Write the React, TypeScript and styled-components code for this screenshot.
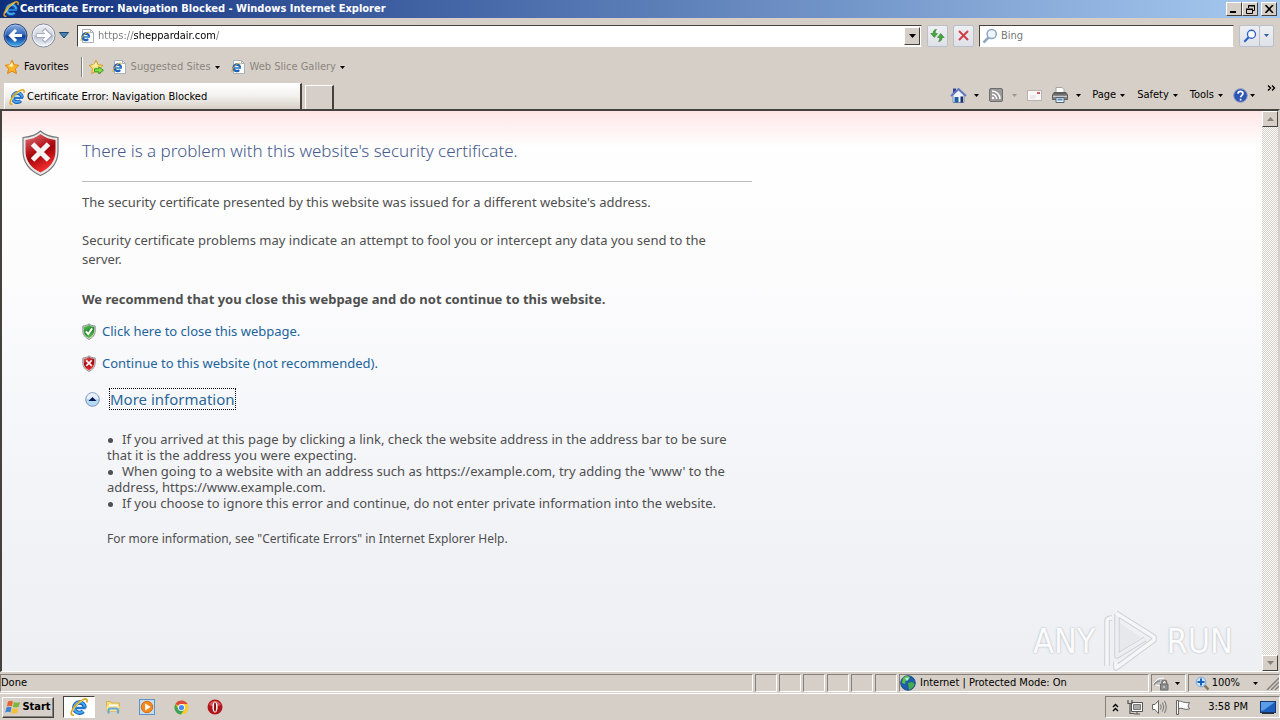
import React from 'react';
import styled, { createGlobalStyle } from 'styled-components';

const face = '#d6cfc7';
const light = '#ffffff';
const shadow = '#84807a';
const dark = '#45423e';
const uiFont = '"DejaVu Sans Condensed", "Noto Sans", sans-serif';
const pageFont = '"Noto Sans", "Open Sans", sans-serif';

const GlobalStyle = createGlobalStyle`
  * { box-sizing: border-box; }
  body { margin: 0; background: ${face}; }
  button, input { font: inherit; color: inherit; padding: 0; margin: 0; border: 0; background: none; border-radius: 0; }
  button { display: inline-flex; align-items: center; justify-content: center; cursor: default; }
  svg { display: block; flex: none; }
`;

const Desktop = styled.div`
  min-height: 100vh;
  display: flex;
  flex-direction: column;
  background: ${face};
  color: #000;
  font: 11px/14px ${uiFont};
  white-space: nowrap;
`;

const TitleBar = styled.header`
  height: 18px;
  flex: none;
  display: flex;
  align-items: center;
  gap: 1px;
  padding: 0 3px;
  background: linear-gradient(90deg, #0f2f7d, #a6caf0);
`;

const WindowTitle = styled.h1`
  flex: 1;
  margin: 0;
  color: #fff;
  font-size: 11px;
  line-height: 18px;
  font-weight: bold;
`;

const WindowButton = styled.button<{ $gap?: boolean }>`
  width: 16px;
  height: 14px;
  margin-left: ${(p) => (p.$gap ? 2 : -1)}px;
  background: ${face};
  border: 1px solid;
  border-color: ${light} ${dark} ${dark} ${light};
`;

const NavRow = styled.div`
  height: 35px;
  flex: none;
  display: flex;
  align-items: center;
  gap: 5px;
  padding: 0 6px 0 3px;
`;

const Travel = styled.div`
  display: flex;
  align-items: center;
  gap: 3px;
`;

const Field = styled.label<{ $width?: string }>`
  flex: ${(p) => (p.$width ? `0 0 ${p.$width}` : '1')};
  min-width: 0;
  height: 22px;
  display: flex;
  align-items: center;
  gap: 3px;
  padding-left: 2px;
  background: #fff;
  border: 1px solid;
  border-color: ${dark} ${face} ${light} ${dark};
`;

const AddressInput = styled.input`
  flex: 1;
  min-width: 0;
  height: 18px;
  outline: 0;
  background: linear-gradient(90deg, #777 36px, #000 36px, #000 117px, #777 117px);
  background-clip: text;
  -webkit-background-clip: text;
  -webkit-text-fill-color: transparent;
`;

const SearchInput = styled.input`
  flex: 1;
  min-width: 0;
  height: 18px;
  outline: 0;
  &::placeholder { color: #777; opacity: 1; }
`;

const DropButton = styled.button`
  width: 16px;
  height: 18px;
  margin-right: 1px;
  background: ${face};
  border: 1px solid;
  border-color: ${light} ${dark} ${dark} ${light};
`;

const SoftButton = styled.button<{ $w?: number }>`
  width: ${(p) => p.$w || 21}px;
  height: 22px;
  flex: none;
  background: linear-gradient(#eeeff3, #dfe1e8);
  border: 1px solid #b9bfcb;
  border-radius: 2px;
`;

const SoftPair = styled.div`
  display: flex;
  ${SoftButton} + ${SoftButton} { margin-left: -1px; }
`;

const FavoritesRow = styled.nav`
  height: 28px;
  flex: none;
  display: flex;
  align-items: center;
  padding-left: 4px;
`;

const FlatButton = styled.button<{ $muted?: boolean; $gap?: number; $right?: number }>`
  height: 20px;
  gap: ${(p) => p.$gap ?? 4}px;
  padding-right: ${(p) => p.$right ?? 0}px;
  color: ${(p) => (p.$muted ? '#8a8680' : '#000')};
`;

const Divider = styled.span`
  width: 2px;
  height: 20px;
  margin: 0 5px 0 12px;
  border-left: 1px solid ${shadow};
  border-right: 1px solid ${light};
`;

const TabRow = styled.div`
  height: 28px;
  flex: none;
  display: flex;
  align-items: flex-end;
  padding-left: 4px;
`;

const Tab = styled.button<{ $active?: boolean }>`
  && { justify-content: flex-start; }
  width: ${(p) => (p.$active ? 298 : 29)}px;
  height: ${(p) => (p.$active ? 26 : 24)}px;
  margin-right: 3px;
  padding-left: 4px;
  gap: 2px;
  background: ${(p) => (p.$active ? `linear-gradient(#fff, #f2f0ed 50%, ${face})` : face)};
  border: solid;
  border-width: 1px 2px 0 1px;
  border-color: ${light} ${dark} ${face} ${light};
`;

const CommandBar = styled.div`
  flex: 1;
  height: 28px;
  display: flex;
  align-items: center;
  justify-content: flex-end;
  gap: 10px;
  padding-right: 4px;
`;

const Overflow = styled.button`
  align-self: flex-start;
  height: 14px;
`;

const Viewport = styled.div`
  flex: 1;
  display: flex;
  position: relative;
  border: solid;
  border-width: 2px 2px 1px 2px;
  border-color: ${dark} ${face} ${light} ${dark};
`;

const Page = styled.main`
  flex: 1;
  min-width: 0;
  display: flex;
  align-items: flex-start;
  gap: 21px;
  padding: 18px 20px 24px 18px;
  background: linear-gradient(#ffe6e6, rgba(255, 255, 255, 0) 36px), linear-gradient(#fff, #fcfcfd 30%, #f4f5f9 62%, #edeff3);
  color: #4f4f4f;
  font: 13px/19px ${pageFont};
  white-space: normal;
`;

const Article = styled.article`
  flex: 0 1 670px;
  min-width: 0;
`;

const Heading = styled.h2`
  margin: 0;
  padding: 10px 0 18px;
  border-bottom: 1px solid #b9bbbd;
  color: #465a8c;
  font-size: 17px;
  line-height: 24px;
  font-weight: 300;
`;

const Para = styled.p<{ $strong?: boolean }>`
  margin: 0;
  padding: ${(p) => (p.$strong ? '13px 0 6px' : '11px 20px 8px 0')};
  font-weight: ${(p) => (p.$strong ? 700 : 400)};
`;

const Choice = styled.a`
  display: flex;
  width: fit-content;
  align-items: center;
  gap: 6px;
  height: 32px;
  color: #20649b;
  text-decoration: none;
`;

const MoreRow = styled.div`
  display: flex;
  align-items: center;
  gap: 10px;
  height: 40px;
  padding-left: 3px;
`;

const MoreLink = styled.a`
  height: 20px;
  outline: 1px dotted #000;
  color: #2a6798;
  font-size: 15px;
  line-height: 20px;
  font-weight: 400;
  text-decoration: none;
`;

const Details = styled.div`
  padding: 12px 0 0 25px;
  line-height: 16px;
`;

const Tips = styled.ul`
  margin: 0 0 18px;
  padding: 0;
  list-style: none;
`;

const Tip = styled.li`
  &::before {
    content: '';
    display: inline-block;
    width: 5px;
    height: 5px;
    margin: 0 9px 1px 1px;
    border-radius: 50%;
    background: #4f4f4f;
  }
`;

const HelpNote = styled.p`
  margin: 0;
  font-size: 12px;
  line-height: 20px;
`;

const ScrollBar = styled.div`
  width: 16px;
  flex: none;
  display: flex;
  flex-direction: column;
  justify-content: space-between;
  background: repeating-conic-gradient(#fff 0 25%, ${face} 0 50%) 0 0 / 2px 2px;
`;

const ScrollButton = styled.button`
  height: 16px;
  background: ${face};
  border: 1px solid;
  border-color: ${light} ${dark} ${dark} ${light};
`;

const Watermark = styled.div`
  position: absolute;
  right: 45px;
  bottom: -2px;
  display: flex;
  align-items: center;
  gap: 8px;
  color: #fafbfc;
  font: 34px/64px "Liberation Sans Narrow", "DejaVu Sans Condensed", sans-serif;
  text-shadow: 0 0 2px #a6a8ac;
  pointer-events: none;
`;

const StatusBar = styled.footer`
  height: 22px;
  flex: none;
  display: flex;
  gap: 2px;
  padding: 2px 0 1px;
  border-bottom: 1px solid ${light};
`;

const Pane = styled.div<{ $w?: number; $gap?: number }>`
  flex: ${(p) => (p.$w ? `0 0 ${p.$w}px` : '1')};
  display: flex;
  align-items: center;
  gap: ${(p) => p.$gap ?? 4}px;
  border: 1px solid;
  border-color: ${shadow} ${light} ${light} ${shadow};
`;

const Spacer = styled.span`
  flex: 1;
`;

const TaskBar = styled.footer`
  height: 26px;
  flex: none;
  display: flex;
  align-items: center;
  padding: 0 0 0 2px;
`;

const StartButton = styled.button`
  width: 52px;
  height: 21px;
  gap: 1px;
  margin-right: 9px;
  font-weight: bold;
  background: ${face};
  border: 1px solid;
  border-color: ${light} ${dark} ${dark} ${light};
  box-shadow: inset -1px -1px ${shadow};
`;

const TaskButton = styled.button<{ $active?: boolean }>`
  width: ${(p) => (p.$active ? 32 : 34)}px;
  height: 22px;
  margin-right: ${(p) => (p.$active ? 1 : 0)}px;
  background: ${(p) => (p.$active ? '#fff' : 'none')};
  border: 1px solid;
  border-color: ${(p) => (p.$active ? `${dark} ${light} ${light} ${dark}` : 'transparent')};
`;

const Tray = styled.div`
  height: 22px;
  display: flex;
  align-items: center;
  gap: 8px;
  padding: 0 3px 0 6px;
  border: 1px solid;
  border-color: ${shadow} ${light} ${light} ${shadow};
`;

const Clock = styled.time`
  padding: 0 4px 0 9px;
`;

const Caret = ({ color = '#000', up = false, wide = false }: { color?: string; up?: boolean; wide?: boolean }) => (
  <svg width={wide ? 7 : 5} height={wide ? 4 : 3} viewBox="0 0 7 4" preserveAspectRatio="none" aria-hidden="true">
    <path d={up ? 'M0 4 3.5 0 7 4Z' : 'M0 0H7L3.5 4Z'} fill={color} />
  </svg>
);

const IeMark = ({ size = 16 }: { size?: number }) => (
  <svg width={size} height={size} viewBox="0 0 16 16" fill="none" aria-hidden="true">
    <circle cx="8.400" cy="8.600" r="4.600" stroke="#1458b0" strokeWidth="3.800" strokeDasharray="25.500 3.400" strokeDashoffset="-3.400" />
    <circle cx="8.400" cy="8.400" r="4.700" stroke="#45a9ee" strokeWidth="2" strokeDasharray="25.800 3.700" strokeDashoffset="-3.800" />
    <path d="M5 8.900H14" stroke="#2379cf" strokeWidth="2.200" />
    <path d="M3.400 15C1.400 15.700.4 14.400 1.600 11.600 3.400 7.400 8 2.900 11.800 1.300 14.600.1 15.900 1.400 14.800 4" stroke="#dba51c" strokeWidth="1.500" />
    <path d="M2.200 12.200C4 8 8.200 3.800 11.800 2" stroke="#fbe58a" strokeWidth=".8" />
  </svg>
);

const IePage = () => (
  <svg width="15" height="16" viewBox="0 0 15 16" fill="none" aria-hidden="true">
    <path d="M2.500 1.500H10.500L13.500 4.500V14.500H2.500Z" fill="#fff" stroke="#a9b0ba" />
    <path d="M10.500 1.500V4.500H13.500" stroke="#a9b0ba" />
    <circle cx="5.800" cy="8.800" r="3.300" stroke="#1d62b6" strokeWidth="2.300" strokeDasharray="18.200 2.500" strokeDashoffset="-2.500" />
    <path d="M3.500 9H10" stroke="#2f7fd0" strokeWidth="1.600" />
    <path d="M1.400 13C.3 12.200 2 8.200 5.400 5.600 8 3.600 9.800 3.800 9.400 5.400" stroke="#d9aa28" />
  </svg>
);

const starPath = 'M8 1.2 10.1 5.7 15 6.3 11.4 9.7 12.4 14.6 8 12.2 3.6 14.6 4.6 9.7 1 6.3 5.9 5.7Z';

const Star = ({ add = false }: { add?: boolean }) => (
  <svg width="16" height="16" viewBox="0 0 16 16" aria-hidden="true">
    <path d={starPath} fill={add ? '#fbe27a' : '#f9b52b'} stroke={add ? '#d79d28' : '#dc8616'} />
    <path d="M8 3.2 9.3 6.6 8 8 4.2 7Z" fill="#fff0a8" />
    {add && <path d="M6.5 9.8H10.8V7.8L15.4 11.3 10.8 14.8V12.8H6.5Z" fill="#8be04c" stroke="#339a24" />}
  </svg>
);

const TravelIcon = ({ forward = false }: { forward?: boolean }) => {
  const id = forward ? 'fwd' : 'back';
  return (
    <svg width="25" height="25" viewBox="0 0 25 25" fill="none" aria-hidden="true">
      <defs>
        <linearGradient id={id} x2="0" y2="1">
          <stop stopColor={forward ? '#eceef3' : '#8fb0e0'} />
          <stop offset=".48" stopColor={forward ? '#d3d8e2' : '#2d62b8'} />
          <stop offset=".52" stopColor={forward ? '#b9c1d0' : '#0b3691'} />
          <stop offset="1" stopColor={forward ? '#f6f9fc' : '#4cb4f2'} />
        </linearGradient>
      </defs>
      <circle cx="12.500" cy="12.500" r="11.500" fill={`url(#${id})`} stroke={forward ? '#7f879b' : '#2a467c'} />
      <circle cx="12.500" cy="12.500" r="10.500" stroke="#fff" strokeOpacity={forward ? '.7' : '.25'} />
      {forward && <path d="M5.500 12.500H18M12.500 6.500 18.500 12.500 12.500 18.500" stroke="#9da5b8" strokeWidth="4.500" />}
      <path
        d={forward ? 'M6 12.500H18M13 7.500 18 12.500 13 17.500' : 'M19 12.500H8M13 7 7.500 12.500 13 18'}
        stroke="#fff"
        strokeWidth="3"
      />
    </svg>
  );
};

const shieldPath = 'M20 2C24 6 31 8 37.500 8.500V22C37.500 34 30 42 20 46.500 10 42 2.500 34 2.500 22V8.500C9 8 16 6 20 2Z';

const Shield = ({ kind, w, h }: { kind: 'bad' | 'good'; w: number; h: number }) => {
  const id = `${kind}${w}`;
  const good = kind === 'good';
  return (
    <svg width={w} height={h} viewBox="0 0 40 48" fill="none" aria-hidden="true">
      <defs>
        <linearGradient id={id} x2=".4" y2="1">
          <stop stopColor={good ? '#7ec56e' : '#dc7c7f'} />
          <stop offset=".45" stopColor={good ? '#2f9a34' : '#b8161d'} />
          <stop offset=".6" stopColor={good ? '#1c7f25' : '#a30209'} />
          <stop offset="1" stopColor={good ? '#62c552' : '#ee2d2d'} />
        </linearGradient>
      </defs>
      <path d={shieldPath} fill="#e9e9e9" stroke="#77787a" strokeWidth={w < 20 ? 2.5 : 1.2} />
      <path
        d="M20 5C24 8.500 30 10.500 35 11V22C35 32.500 28.500 39.500 20 43.500 11.500 39.500 5 32.500 5 22V11C10 10.500 16 8.500 20 5Z"
        fill={`url(#${id})`}
      />
      {good ? (
        <path d="M11 24 18 31 29 15" stroke="#fff" strokeWidth="5.500" />
      ) : (
        <path d="M12 15 28 31M28 15 12 31" stroke="#f4f2f2" strokeWidth="5" />
      )}
    </svg>
  );
};

const Magnifier = ({ size, color, lens = '#fff' }: { size: number; color: string; lens?: string }) => (
  <svg width={size} height={size} viewBox="0 0 16 16" fill="none" aria-hidden="true">
    <path d="M6.500 9.500 1.500 14.500" stroke={color} strokeWidth="2.500" />
    <circle cx="9.700" cy="6" r="4.600" fill={lens} stroke={color} strokeWidth="1.500" />
  </svg>
);

const ZoomIcon = () => (
  <svg width="15" height="15" viewBox="0 0 15 15" fill="none" aria-hidden="true">
    <path d="M9 9 13.500 13.500" stroke="#8a7a64" strokeWidth="2.500" />
    <circle cx="6" cy="6" r="4.800" fill="#cfe5fb" stroke="#7da7d6" />
    <path d="M6 2.500V9.500M2.500 6H9.500" stroke="#1560c0" strokeWidth="2" />
  </svg>
);

const RefreshIcon = () => (
  <svg width="15" height="15" viewBox="0 0 15 15" aria-hidden="true">
    <path d="M6.500 1.500C3.500 1.500 3 4 3.200 5.500H.8L4.300 9.500 7.500 5.500H5.400C5.200 4 5.300 2.700 6.500 1.500Z" fill="#46a83b" stroke="#2b7f2d" strokeWidth=".6" />
    <path d="M8.500 13.500C11.500 13.500 12.200 11 12 9.500H14.200L10.700 5.500 7.500 9.500H9.600C9.800 11 9.700 12.300 8.500 13.500Z" fill="#46a83b" stroke="#2b7f2d" strokeWidth=".6" />
  </svg>
);

const HomeIcon = () => (
  <svg width="17" height="17" viewBox="0 0 17 17" aria-hidden="true">
    <path d="M3 1.500H6V6H3Z" fill="#34439a" />
    <path d="M3 8 8.500 3 14 8V15.500H3Z" fill="#f1f4fb" stroke="#7d8bb0" />
    <path d="M1 9 8.500 2 16 9" fill="none" stroke="#5f78c0" strokeWidth="1.800" />
    <path d="M4.500 10H8.500V15.500H4.500Z" fill="#1e64a4" />
    <path d="M10.500 9.500H13V15.500H10.500Z" fill="#1b2f6b" />
  </svg>
);

const FeedIcon = () => (
  <svg width="14" height="14" viewBox="0 0 14 14" fill="none" aria-hidden="true">
    <rect x=".5" y=".5" width="13" height="13" rx="1.500" fill="#999" stroke="#6e6e6e" />
    <circle cx="4" cy="10" r="1.300" fill="#fff" />
    <path d="M3 6.300A4.700 4.700 0 0 1 7.700 11M3 3A8 8 0 0 1 11 11" stroke="#fff" strokeWidth="1.500" />
  </svg>
);

const MailIcon = () => (
  <svg width="15" height="11" viewBox="0 0 15 11" fill="none" aria-hidden="true">
    <rect x=".5" y=".5" width="14" height="10" fill="#f8f7f5" stroke="#b8b3ae" />
    <path d="M3 6H9M3 8H8" stroke="#ddd" />
    <path d="M10 2H13V4H10Z" fill="#cf625c" />
  </svg>
);

const PrinterIcon = () => (
  <svg width="16" height="16" viewBox="0 0 16 16" aria-hidden="true">
    <path d="M4 .5H10L12 2.500V6H4Z" fill="#fff" stroke="#a5a5a5" />
    <path d="M2 5.500H14L15.500 8V12.500H.5V8Z" fill="#868686" stroke="#5c5c5c" />
    <path d="M2 6H14V7.500H2Z" fill="#5f5f5f" />
    <path d="M1 9H15V10H1Z" fill="#c9c9c9" />
    <path d="M4 10.500H12V15.500H4Z" fill="#eef5fa" stroke="#54616e" />
    <path d="M5.500 11.500H10.500V13.500H5.500Z" fill="#4f8fc0" />
  </svg>
);

const HelpIcon = () => (
  <svg width="15" height="15" viewBox="0 0 15 15" fill="none" aria-hidden="true">
    <circle cx="7.500" cy="7.500" r="6.800" fill="#2f56b4" stroke="#8b9cc4" />
    <path d="M5 5.800C5 2.700 10 2.700 10 5.600 10 7.400 7.600 7.400 7.600 9.300M7.600 10.800V12.500" stroke="#fff" strokeWidth="1.700" />
  </svg>
);

const ExpandIcon = () => (
  <svg width="15" height="15" viewBox="0 0 15 15" aria-hidden="true">
    <circle cx="7.500" cy="7.500" r="6.800" fill="#b5daf5" stroke="#7992b8" />
    <path d="M1.500 7A6 6 0 0 1 13.500 7Z" fill="#e6effa" />
    <path d="M3.500 9 7.500 5 11.500 9Z" fill="#07164f" />
  </svg>
);

const GlobeIcon = () => (
  <svg width="16" height="16" viewBox="0 0 16 16" aria-hidden="true">
    <circle cx="8" cy="8" r="7.300" fill="#1b5fa8" stroke="#23508c" />
    <path d="M3 3C6 0 9 1 10 2.500L8.500 5 5.500 6 5 9 2 8Z" fill="#5cc04a" />
    <path d="M8 8 12 7 14.500 9C14 12 11 14.500 9 14.500L8.500 11Z" fill="#46ad49" />
    <path d="M5 3 9 2.500 7 6Z" fill="#bcecf6" />
  </svg>
);

const ProtectIcon = () => (
  <svg width="18" height="15" viewBox="0 0 18 15" fill="none" aria-hidden="true">
    <path d="M1 8 6 3 11 2 13 5 8 10Z" fill="#c2c2c2" stroke="#fff" />
    <path d="M2 9C4 6 5 5 8 5" stroke="#888" strokeWidth="1.500" />
    <path d="M10 8V6.500A2.300 2.300 0 0 1 14.600 6.500V8" stroke="#777" strokeWidth="1.500" />
    <path d="M8.500 8H16V14H8.500Z" fill="#8f8f8f" stroke="#6d6d6d" />
    <path d="M12 10V12" stroke="#eee" />
  </svg>
);

const WindowsFlag = () => (
  <svg width="16" height="16" viewBox="0 0 16 16" aria-hidden="true">
    <path d="M3 2.500C5 1.200 6.500 1.500 8 2.500L6.800 7.500C5 6.500 3.500 6.500 1.800 7.500Z" fill="#e7652c" />
    <path d="M9 3C11 4 12.500 4 15 2.800L13.800 7.800C12 8.800 10 8.800 7.800 7.800Z" fill="#7db83e" />
    <path d="M1.500 8.500C3.500 7.500 5 7.700 6.500 8.600L5.400 13.500C4 12.500 2 12.500.2 13.500Z" fill="#3e83cf" />
    <path d="M7.500 9C9.500 10 11.500 10 13.500 9L12.300 14C10 15 8.500 15 6.300 14Z" fill="#f3c03b" />
  </svg>
);

const FolderIcon = () => (
  <svg width="16" height="16" viewBox="0 0 16 16" aria-hidden="true">
    <path d="M1.500 2.500H6L7 4H14.500V12H1.500Z" fill="#f4da78" stroke="#d5b354" />
    <path d="M4 5.500H13V7H4Z" fill="#fff" />
    <path d="M1.500 7H14.500V12H1.500Z" fill="#f8e596" />
    <path d="M3.500 14.500V11A2 2 0 0 1 5.500 9.500H11A2 2 0 0 1 13 11V14.500" fill="none" stroke="#63a9da" strokeWidth="2.200" />
  </svg>
);

const PlayerIcon = () => (
  <svg width="16" height="16" viewBox="0 0 16 16" aria-hidden="true">
    <rect x=".5" y=".5" width="15" height="15" fill="#c3ddf3" stroke="#5e92c8" />
    <circle cx="8" cy="8" r="5.700" fill="#f28a1d" stroke="#d96d0c" />
    <path d="M6.200 4.600 11.600 8 6.200 11.400Z" fill="#fff" />
  </svg>
);

const ChromeIcon = () => (
  <svg width="15" height="15" viewBox="0 0 16 16" aria-hidden="true">
    <circle cx="8" cy="8" r="7.500" fill="#f7cb32" />
    <path d="M8 8 1.500 4.200A7.500 7.500 0 0 1 14.500 4.300H8Z" fill="#dd4b3a" />
    <path d="M1.500 4.200A7.500 7.500 0 0 0 7.400 15.500L11 10 8 8 4.800 9.800Z" fill="#3fa35a" />
    <circle cx="8" cy="8" r="3.700" fill="#fff" />
    <circle cx="8" cy="8" r="2.800" fill="#4a8af0" />
  </svg>
);

const OperaIcon = () => (
  <svg width="16" height="16" viewBox="0 0 16 16" aria-hidden="true">
    <circle cx="8" cy="8" r="7.500" fill="#b3141b" />
    <path d="M2 6A6.500 6.500 0 0 1 14 6L8 8Z" fill="#d8545a" />
    <ellipse cx="8" cy="8" rx="2.600" ry="5.600" fill="#fff" />
    <ellipse cx="8" cy="8" rx="1.100" ry="4.700" fill="#8a0d13" />
  </svg>
);

const NetworkIcon = () => (
  <svg width="16" height="16" viewBox="0 0 16 16" fill="none" aria-hidden="true">
    <path d="M4.500 3.500H15.500V12.500H4.500Z" fill="#fff" stroke="#555" />
    <path d="M6.500 5.500H13.500V10.500H6.500Z" fill="#aaa" stroke="#777" />
    <path d="M7 15H13M10 12.500V15" stroke="#555" />
    <path d="M1 1V4.500H5V1M3 4.500V14.500H7" stroke="#555" strokeWidth="1.200" />
  </svg>
);

const SpeakerIcon = () => (
  <svg width="16" height="16" viewBox="0 0 16 16" fill="none" aria-hidden="true">
    <path d="M1.500 5.500H4L7.500 1.500V14.500L4 10.500H1.500Z" fill="#fff" stroke="#666" />
    <path d="M9.500 5.500Q11 8 9.500 10.500M11.500 3.500Q14 8 11.500 12.500M13.500 2Q17 8 13.500 14" stroke="#777" />
  </svg>
);

const FlagIcon = () => (
  <svg width="16" height="16" viewBox="0 0 16 16" aria-hidden="true">
    <path d="M3.500 2.500C6 1 8 4.500 14.500 3.500L13 7 14.500 10C9 11.500 7 8 3.500 9.500Z" fill="#fff" stroke="#666" />
    <path d="M1.500 1.500H3.500V15.500H1.500Z" fill="#fff" stroke="#666" />
  </svg>
);

const DesktopIcon = () => (
  <svg width="16" height="13" viewBox="0 0 16 13" aria-hidden="true">
    <rect x=".5" y=".5" width="15" height="11" fill="#1d5fbd" stroke="#16376f" />
    <path d="M1 1H15L4 9 1 10Z" fill="#5b9de6" />
    <path d="M2 11.500H14V13H2Z" fill="#252f40" />
  </svg>
);

const PlayMark = () => (
  <svg width="55" height="64" viewBox="0 0 55 64" fill="none" strokeLinejoin="round" aria-hidden="true">
    <g stroke="#cdcfd3" strokeWidth="5.500">
      <path d="M4 57V12Q4 9 9 9" />
      <path d="M13 4 51 28V31L13 59V53" />
      <path d="M14 5V47L42 30" />
    </g>
    <g strokeWidth="3.500">
      <path d="M14 5V47L42 30" stroke="#eceef1" />
      <path d="M4 57V12Q4 9 9 9M13 4 51 28V31L13 59V53" stroke="#f4f6f8" />
    </g>
    <path d="M17 14 39 29 17 42Z" fill="#e6e8eb" />
  </svg>
);

const tips = [
  'If you arrived at this page by clicking a link, check the website address in the address bar to be sure that it is the address you were expecting.',
  "When going to a website with an address such as https://example.com, try adding the 'www' to the address, https://www.example.com.",
  'If you choose to ignore this error and continue, do not enter private information into the website.',
];

export default function App() {
  return (
    <Desktop>
      <GlobalStyle />
      <TitleBar>
        <IeMark size={16} />
        <WindowTitle>Certificate Error: Navigation Blocked - Windows Internet Explorer</WindowTitle>
        <WindowButton aria-label="Minimize">
          <svg width="8" height="8"><path d="M0 6H6V8H0Z" /></svg>
        </WindowButton>
        <WindowButton aria-label="Restore">
          <svg width="9" height="9" fill="none" stroke="#000"><path d="M2.500 3V.5H8.500V5.500H6M2 1H9M.5 4.500H6.500V8.500H.5ZM0 4H7" /></svg>
        </WindowButton>
        <WindowButton $gap aria-label="Close">
          <svg width="9" height="8" fill="none" stroke="#000" strokeWidth="1.600"><path d="M.5 0 8 8M8 0 .5 8" /></svg>
        </WindowButton>
      </TitleBar>

      <NavRow>
        <Travel>
          <button aria-label="Back"><TravelIcon /></button>
          <button aria-label="Forward"><TravelIcon forward /></button>
          <FlatButton aria-label="Recent pages" $right={3}>
            <svg width="10" height="7"><path d="M.5.500H9.500L5 6Z" fill="#3f86bd" stroke="#23466f" /></svg>
          </FlatButton>
        </Travel>
        <Field>
          <IePage />
          <AddressInput aria-label="Address" defaultValue="https://sheppardair.com/" />
          <DropButton aria-label="Show address list"><Caret wide /></DropButton>
        </Field>
        <SoftButton aria-label="Refresh"><RefreshIcon /></SoftButton>
        <SoftButton aria-label="Stop">
          <svg width="11" height="11" fill="none" stroke="#cf4248" strokeWidth="2"><path d="M1 1 10 10M10 1 1 10" /></svg>
        </SoftButton>
        <Field $width="255px">
          <Magnifier size={16} color="#8fa5c0" lens="#eef6fd" />
          <SearchInput aria-label="Search" placeholder="Bing" />
        </Field>
        <SoftPair>
          <SoftButton aria-label="Search"><Magnifier size={14} color="#2a62c8" /></SoftButton>
          <SoftButton $w={15} aria-label="Search options"><Caret color="#2c5e9e" /></SoftButton>
        </SoftPair>
      </NavRow>

      <FavoritesRow>
        <FlatButton><Star />Favorites</FlatButton>
        <Divider />
        <FlatButton aria-label="Add to Favorites Bar" $right={8}><Star add /></FlatButton>
        <FlatButton $muted $right={11}><IePage />Suggested Sites<Caret /></FlatButton>
        <FlatButton $muted><IePage />Web Slice Gallery<Caret /></FlatButton>
      </FavoritesRow>

      <TabRow>
        <Tab $active><IeMark size={16} />Certificate Error: Navigation Blocked</Tab>
        <Tab aria-label="New Tab" />
        <CommandBar>
          <FlatButton aria-label="Home" $gap={7}><HomeIcon /><Caret /></FlatButton>
          <FlatButton aria-label="Feeds" $gap={9}><FeedIcon /><Caret color="#9b9690" /></FlatButton>
          <FlatButton aria-label="Read mail"><MailIcon /></FlatButton>
          <FlatButton aria-label="Print" $gap={8} $right={1}><PrinterIcon /><Caret /></FlatButton>
          <FlatButton $right={2}>Page<Caret /></FlatButton>
          <FlatButton $right={2}>Safety<Caret /></FlatButton>
          <FlatButton>Tools<Caret /></FlatButton>
          <FlatButton aria-label="Help" $gap={2} $right={2}><HelpIcon /><Caret /></FlatButton>
          <Overflow aria-label="More commands">
            <svg width="9" height="6" fill="none" stroke="#000" strokeWidth="1.400"><path d="M1 .5 3.500 3 1 5.500M5 .5 7.500 3 5 5.500" /></svg>
          </Overflow>
        </CommandBar>
      </TabRow>

      <Viewport>
        <Page>
          <Shield kind="bad" w={41} h={48} />
          <Article>
            <Heading>There is a problem with this website's security certificate.</Heading>
            <Para>The security certificate presented by this website was issued for a different website's address.</Para>
            <Para>Security certificate problems may indicate an attempt to fool you or intercept any data you send to the server.</Para>
            <Para $strong>We recommend that you close this webpage and do not continue to this website.</Para>
            <Choice href="#close"><Shield kind="good" w={14} h={17} />Click here to close this webpage.</Choice>
            <Choice href="#continue"><Shield kind="bad" w={14} h={17} />Continue to this website (not recommended).</Choice>
            <MoreRow>
              <ExpandIcon />
              <MoreLink href="#more">More information</MoreLink>
            </MoreRow>
            <Details>
              <Tips>
                {tips.map((tip) => <Tip key={tip}>{tip}</Tip>)}
              </Tips>
              <HelpNote>For more information, see "Certificate Errors" in Internet Explorer Help.</HelpNote>
            </Details>
          </Article>
        </Page>
        <ScrollBar>
          <ScrollButton aria-label="Scroll up"><Caret wide up color="#858078" /></ScrollButton>
          <ScrollButton aria-label="Scroll down"><Caret wide color="#858078" /></ScrollButton>
        </ScrollBar>
        <Watermark><span>ANY</span><PlayMark /><span>RUN</span></Watermark>
      </Viewport>

      <StatusBar>
        <Pane>Done</Pane>
        {[0, 1, 2, 3, 4, 5].map((n) => <Pane key={n} $w={22} />)}
        <Pane $w={250}><GlobeIcon />Internet | Protected Mode: On</Pane>
        <Pane $w={35} $gap={5}><ProtectIcon /><Caret /></Pane>
        <Pane $w={92} $gap={2}>
          <Spacer /><ZoomIcon />100%<Spacer /><Spacer /><Caret /><Spacer />
          <svg width="13" height="13" fill="none" stroke="#84807a" strokeWidth="1.500"><path d="M1 13 13 1M5 13 13 5M9 13 13 9" /></svg>
        </Pane>
      </StatusBar>

      <TaskBar>
        <StartButton><WindowsFlag />Start</StartButton>
        <TaskButton $active aria-label="Internet Explorer"><IeMark size={18} /></TaskButton>
        <TaskButton aria-label="Windows Explorer"><FolderIcon /></TaskButton>
        <TaskButton aria-label="Media Player"><PlayerIcon /></TaskButton>
        <TaskButton aria-label="Chrome"><ChromeIcon /></TaskButton>
        <TaskButton aria-label="Opera"><OperaIcon /></TaskButton>
        <Spacer />
        <Tray>
          <button aria-label="Show hidden icons">
            <svg width="7" height="9" fill="none" stroke="#000" strokeWidth="1.400"><path d="M1 4 3.500 1.500 6 4M1 8 3.500 5.500 6 8" /></svg>
          </button>
          <NetworkIcon />
          <SpeakerIcon />
          <FlagIcon />
          <Clock>3:58 PM</Clock>
          <DesktopIcon />
        </Tray>
      </TaskBar>
    </Desktop>
  );
}
